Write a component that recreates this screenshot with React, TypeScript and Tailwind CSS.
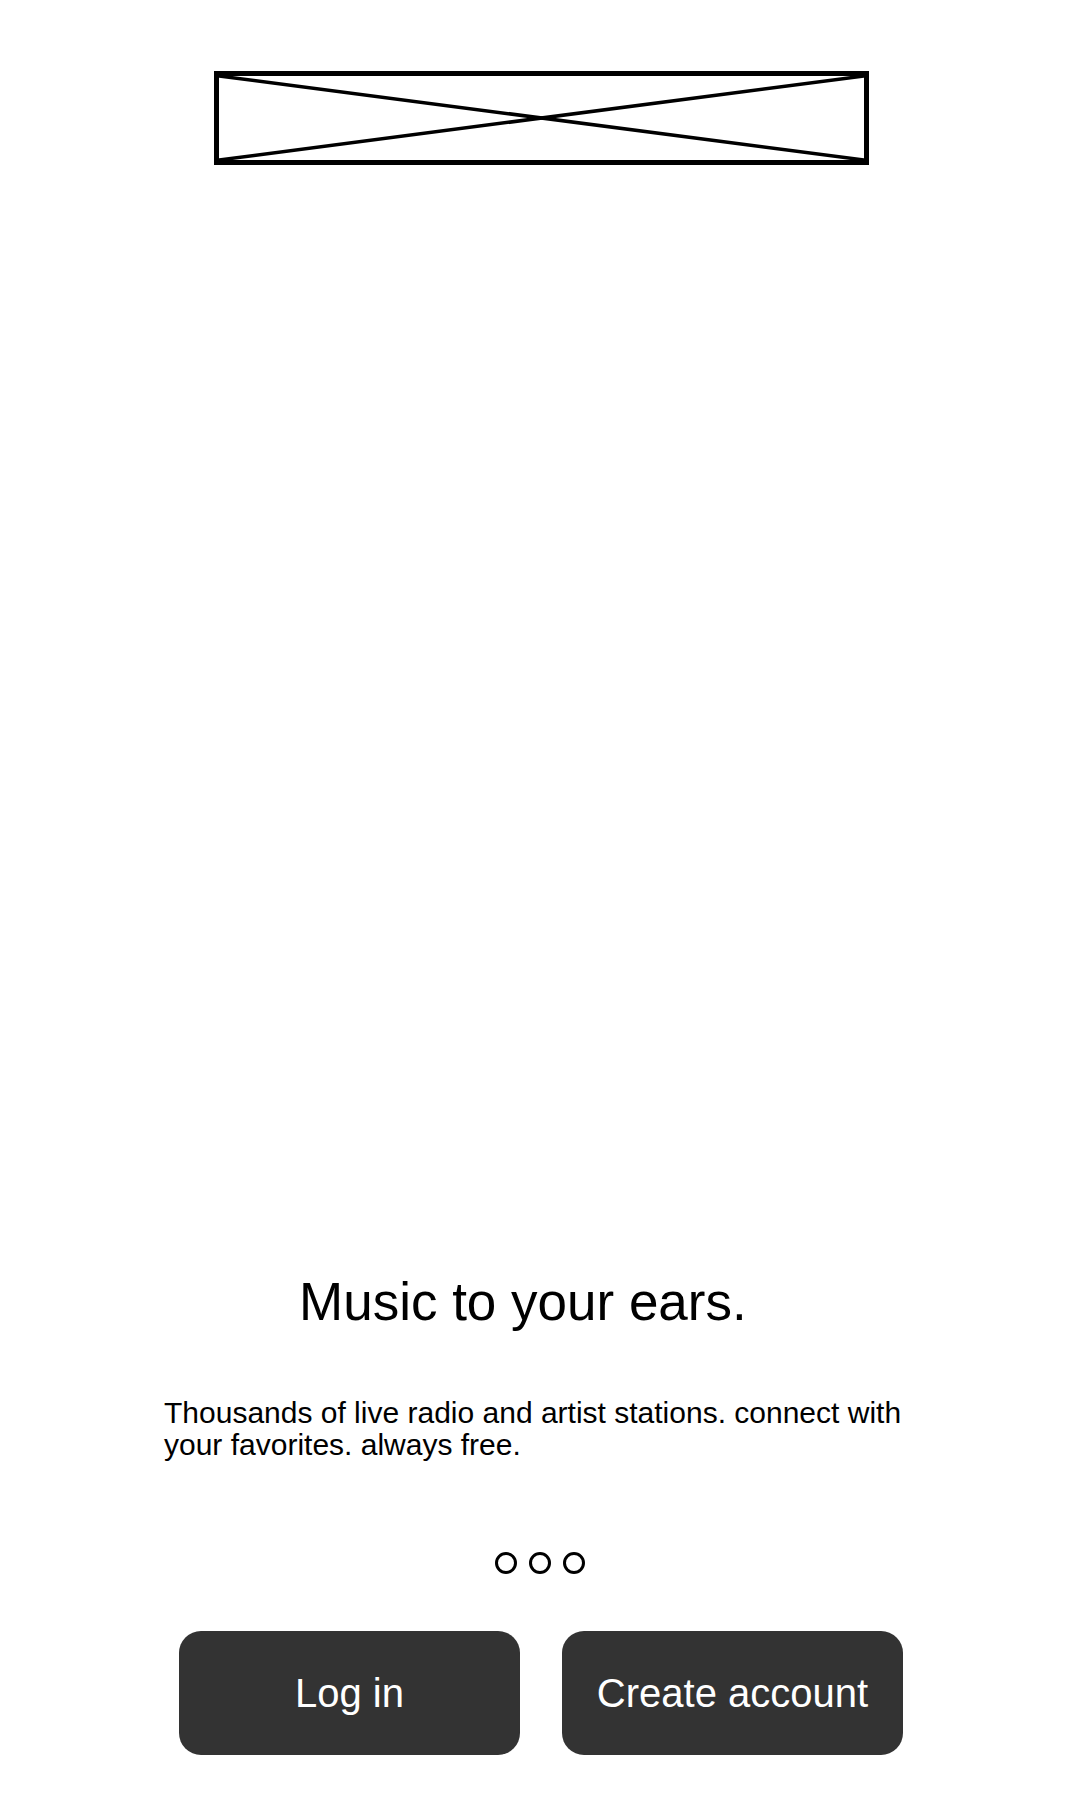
import React from "react";

export default function App() {
  return (
    <div
      className="w-[1080px] h-[1800px] bg-white flex flex-col text-black"
      style={{ fontFamily: '"Liberation Sans", Arial, sans-serif' }}
    >
      <div className="mt-[71px] ml-[214px] w-[655px] h-[94px] border-[5px] border-black relative">
        <svg className="absolute inset-0 w-full h-full" viewBox="0 0 100 100" preserveAspectRatio="none">
          <line x1="0" y1="0" x2="100" y2="100" stroke="black" strokeWidth="3.5" vectorEffect="non-scaling-stroke" />
          <line x1="100" y1="0" x2="0" y2="100" stroke="black" strokeWidth="3.5" vectorEffect="non-scaling-stroke" />
        </svg>
      </div>

      <h1 className="mt-[1110px] pl-[299px] text-[53px] leading-none font-normal whitespace-nowrap">
        Music to your ears.
      </h1>

      <p className="mt-[69px] pl-[164px] pr-[168px] text-[30px] leading-[32px]">
        Thousands of live radio and artist stations. connect with your favorites. always free.
      </p>

      <div className="mt-[91px] flex justify-center gap-[12px]">
        <div className="w-[22px] h-[22px] rounded-full border-[3px] border-black" />
        <div className="w-[22px] h-[22px] rounded-full border-[3px] border-black" />
        <div className="w-[22px] h-[22px] rounded-full border-[3px] border-black" />
      </div>

      <div className="mt-[57px] pl-[2px] flex justify-center gap-[42px]">
        <button className="w-[341px] h-[124px] rounded-[22px] bg-[#333333] text-white text-[40px] leading-none">
          Log in
        </button>
        <button className="w-[341px] h-[124px] rounded-[22px] bg-[#333333] text-white text-[40px] leading-none">
          Create account
        </button>
      </div>
    </div>
  );
}
